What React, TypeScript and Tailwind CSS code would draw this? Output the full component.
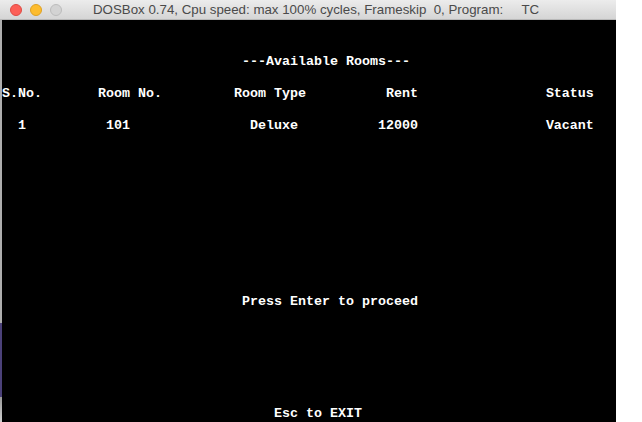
const col = (parts: [number, string][]) => {
  let s = "";
  for (const [c, t] of parts) s = s.padEnd(c, " ") + t;
  return s;
};

// 25 text rows, 16px each, like the 80x25 dos screen
const screen: Record<number, string> = {
  2: col([[30, "---Available Rooms---"]]),
  4: col([
    [0, "S.No."],
    [12, "Room No."],
    [29, "Room Type"],
    [48, "Rent"],
    [68, "Status"],
  ]),
  6: col([
    [2, "1"],
    [13, "101"],
    [31, "Deluxe"],
    [47, "12000"],
    [68, "Vacant"],
  ]),
  17: col([[30, "Press Enter to proceed"]]),
  24: col([[34, "Esc to EXIT"]]),
};

const App = () => {
  return (
    <div className="w-[642px] h-[422px] bg-white overflow-hidden flex">
      <div className="w-[616px] h-full flex flex-col">
        {/* title bar */}
        <div className="h-[22px] flex items-center bg-gradient-to-b from-[#ececec] to-[#d5d5d5] border-b border-[#b8b8b8]">
          <div className="flex items-center gap-2 pl-[10px]">
            <span className="w-3 h-3 rounded-full bg-[#fc5f57] border border-[#de4a43]" />
            <span className="w-3 h-3 rounded-full bg-[#fdbc2e] border border-[#dea123]" />
            <span className="w-3 h-3 rounded-full bg-[#d3d3d3] border border-[#bcbcbc]" />
          </div>
          <div
            className="ml-[31px] text-[13.3px] text-[#4a4a4a] whitespace-pre leading-none"
            style={{ fontFamily: '"Liberation Sans", Arial, sans-serif' }}
          >
            DOSBox 0.74, Cpu speed: max 100% cycles, Frameskip  0, Program:     TC
          </div>
        </div>

        <div className="flex-1 flex">
          {/* desktop peeking through on the left */}
          <div className="w-[2px] flex flex-col">
            <div className="flex-1 bg-[#aeaeae]" />
            <div className="h-[74px] bg-[#4b4179]" />
            <div className="h-[25px] bg-gradient-to-b from-[#9a9a9a] to-[#cfcfcf]" />
          </div>

          {/* dos screen */}
          <div className="flex-1 bg-black overflow-hidden pt-[2px]">
            {Array.from({ length: 25 }, (_, i) => (
              <div
                key={i}
                className="h-4 leading-4 text-[13.33px] font-bold text-white whitespace-pre"
                style={{ fontFamily: '"Liberation Mono", "DejaVu Sans Mono", monospace' }}
              >
                {screen[i] ?? ""}
              </div>
            ))}
          </div>
        </div>
      </div>
    </div>
  );
};

export default App;
